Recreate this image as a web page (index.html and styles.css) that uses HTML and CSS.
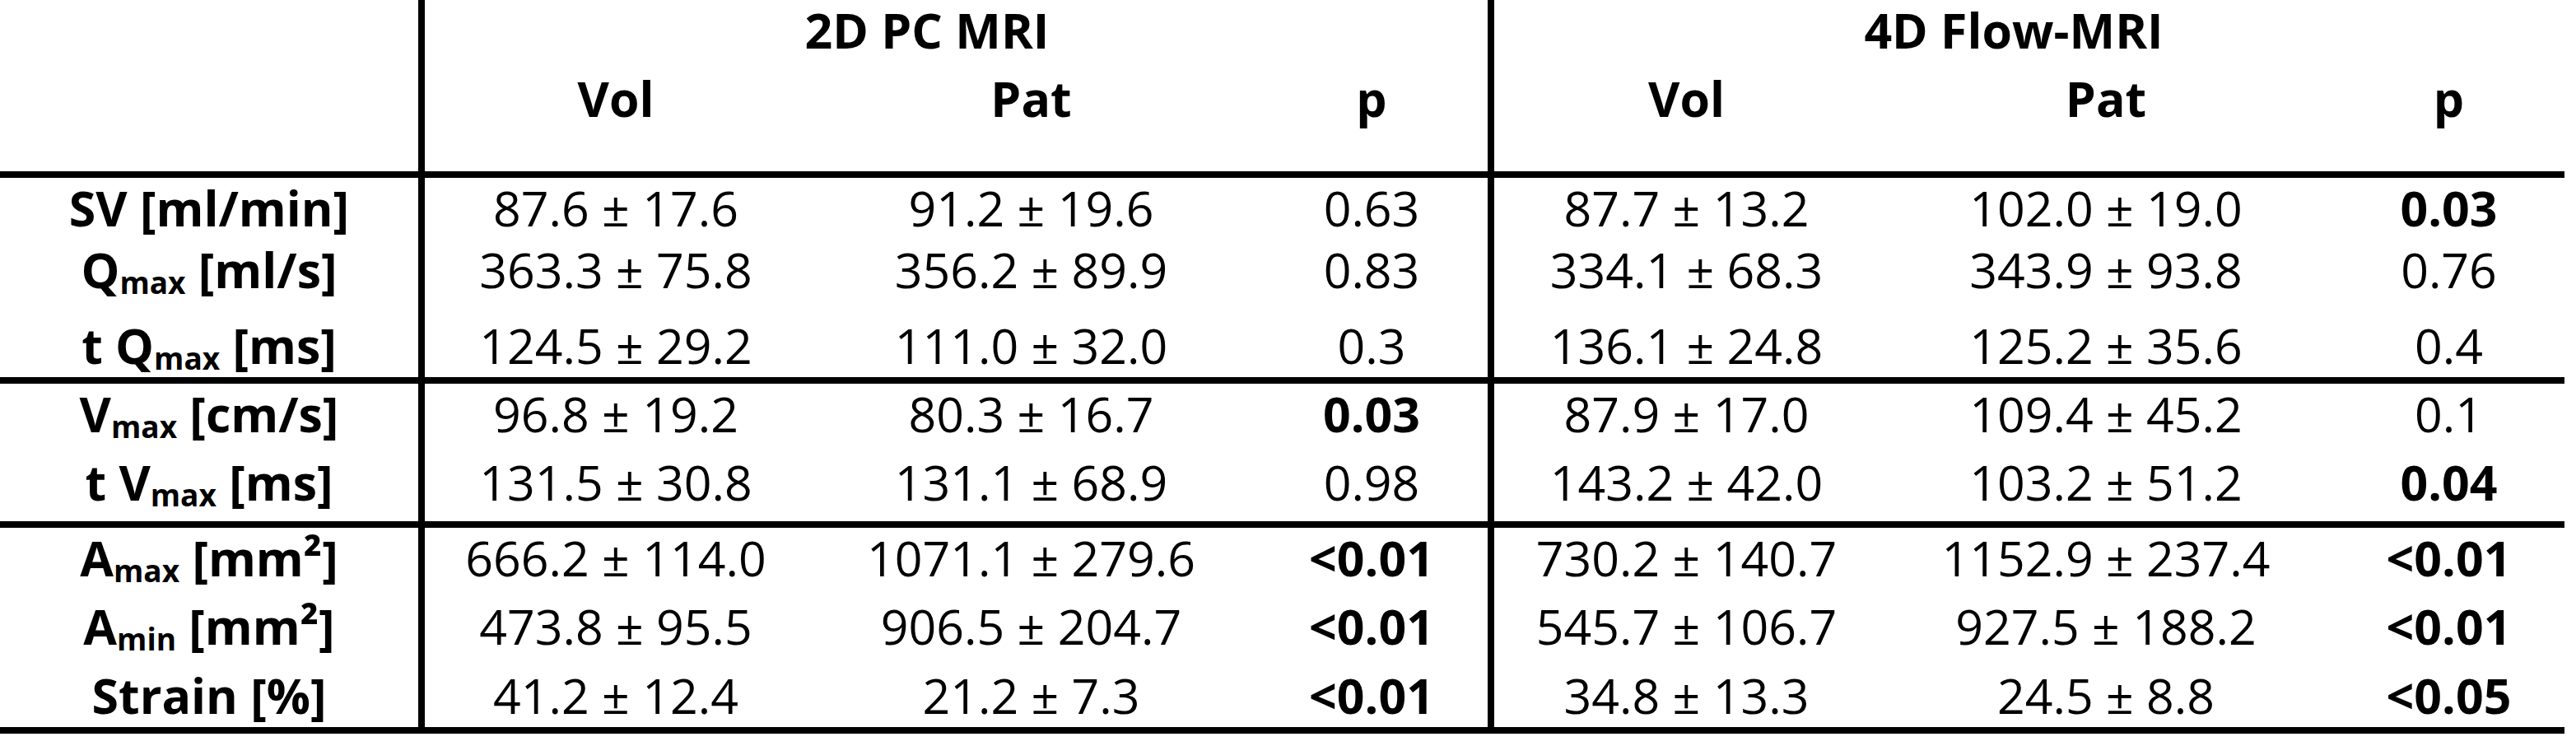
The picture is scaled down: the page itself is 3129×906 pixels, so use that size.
FILE: index.html
```html
<!DOCTYPE html>
<html lang="en">
<head>
<meta charset="utf-8">
<title>2D PC MRI vs 4D Flow-MRI</title>
<link rel="stylesheet" href="styles.css">
</head>
<body>
<div class="tbl">
  <div class="c lab"></div>
  <div class="c b grp g2d">2D PC MRI</div>
  <div class="c b grp g4d">4D Flow-MRI</div>

  <div class="c lab"></div>
  <div class="c b">Vol</div>
  <div class="c b">Pat</div>
  <div class="c b pcol">p</div>
  <div class="c b">Vol</div>
  <div class="c b">Pat</div>
  <div class="c b">p</div>

  <div class="hline"></div>

  <div class="c lab b">SV [ml/min]</div>
  <div class="c">87.6 ± 17.6</div>
  <div class="c">91.2 ± 19.6</div>
  <div class="c pcol">0.63</div>
  <div class="c">87.7 ± 13.2</div>
  <div class="c">102.0 ± 19.0</div>
  <div class="c b">0.03</div>

  <div class="c lab b">Q<sub>max</sub> [ml/s]</div>
  <div class="c">363.3 ± 75.8</div>
  <div class="c">356.2 ± 89.9</div>
  <div class="c pcol">0.83</div>
  <div class="c">334.1 ± 68.3</div>
  <div class="c">343.9 ± 93.8</div>
  <div class="c">0.76</div>

  <div class="c lab b">t Q<sub>max</sub> [ms]</div>
  <div class="c">124.5 ± 29.2</div>
  <div class="c">111.0 ± 32.0</div>
  <div class="c pcol">0.3</div>
  <div class="c">136.1 ± 24.8</div>
  <div class="c">125.2 ± 35.6</div>
  <div class="c">0.4</div>

  <div class="hline"></div>

  <div class="c lab b">V<sub>max</sub> [cm/s]</div>
  <div class="c">96.8 ± 19.2</div>
  <div class="c">80.3 ± 16.7</div>
  <div class="c pcol b">0.03</div>
  <div class="c">87.9 ± 17.0</div>
  <div class="c">109.4 ± 45.2</div>
  <div class="c">0.1</div>

  <div class="c lab b">t V<sub>max</sub> [ms]</div>
  <div class="c">131.5 ± 30.8</div>
  <div class="c">131.1 ± 68.9</div>
  <div class="c pcol">0.98</div>
  <div class="c">143.2 ± 42.0</div>
  <div class="c">103.2 ± 51.2</div>
  <div class="c b">0.04</div>

  <div class="hline"></div>

  <div class="c lab b">A<sub>max</sub> [mm²]</div>
  <div class="c">666.2 ± 114.0</div>
  <div class="c">1071.1 ± 279.6</div>
  <div class="c pcol b">&lt;0.01</div>
  <div class="c">730.2 ± 140.7</div>
  <div class="c">1152.9 ± 237.4</div>
  <div class="c b">&lt;0.01</div>

  <div class="c lab b">A<sub>min</sub> [mm²]</div>
  <div class="c">473.8 ± 95.5</div>
  <div class="c">906.5 ± 204.7</div>
  <div class="c pcol b">&lt;0.01</div>
  <div class="c">545.7 ± 106.7</div>
  <div class="c">927.5 ± 188.2</div>
  <div class="c b">&lt;0.01</div>

  <div class="c lab b">Strain [%]</div>
  <div class="c">41.2 ± 12.4</div>
  <div class="c">21.2 ± 7.3</div>
  <div class="c pcol b">&lt;0.01</div>
  <div class="c">34.8 ± 13.3</div>
  <div class="c">24.5 ± 8.8</div>
  <div class="c b">&lt;0.05</div>

  <div class="hline"></div>
</div>
</body>
</html>
```
FILE: styles.css
```css
html, body {
  margin: 0;
  padding: 0;
  background: #ffffff;
}

.tbl {
  display: grid;
  width: 3115px;
  grid-template-columns: 516px 464px 545px 290px 467px 552px 281px;
  grid-template-rows: 83px 125px 8px 75px 92px 75px 8px 83px 84px 8px 83px 84px 75px 8px;
  font-family: "Open Sans", "Noto Sans", sans-serif;
  font-size: 59px;
  line-height: 60px;
  color: #000;
}

.c {
  box-sizing: border-box;
  padding-top: 6px;
  text-align: center;
  white-space: nowrap;
  overflow: visible;
}

.b {
  font-weight: 700;
}

.lab {
  border-right: 8px solid #000;
}

.pcol {
  border-right: 8px solid #000;
}

.grp {
  font-weight: 700;
}

.g2d {
  grid-column: 2 / 5;
  border-right: 8px solid #000;
  padding-right: 71px;
}

.g4d {
  grid-column: 5 / 8;
  padding-right: 38px;
}

.hline {
  grid-column: 1 / -1;
  background: #000;
}

sub {
  font-size: 37px;
  line-height: 0;
  vertical-align: -7px;
}
```
